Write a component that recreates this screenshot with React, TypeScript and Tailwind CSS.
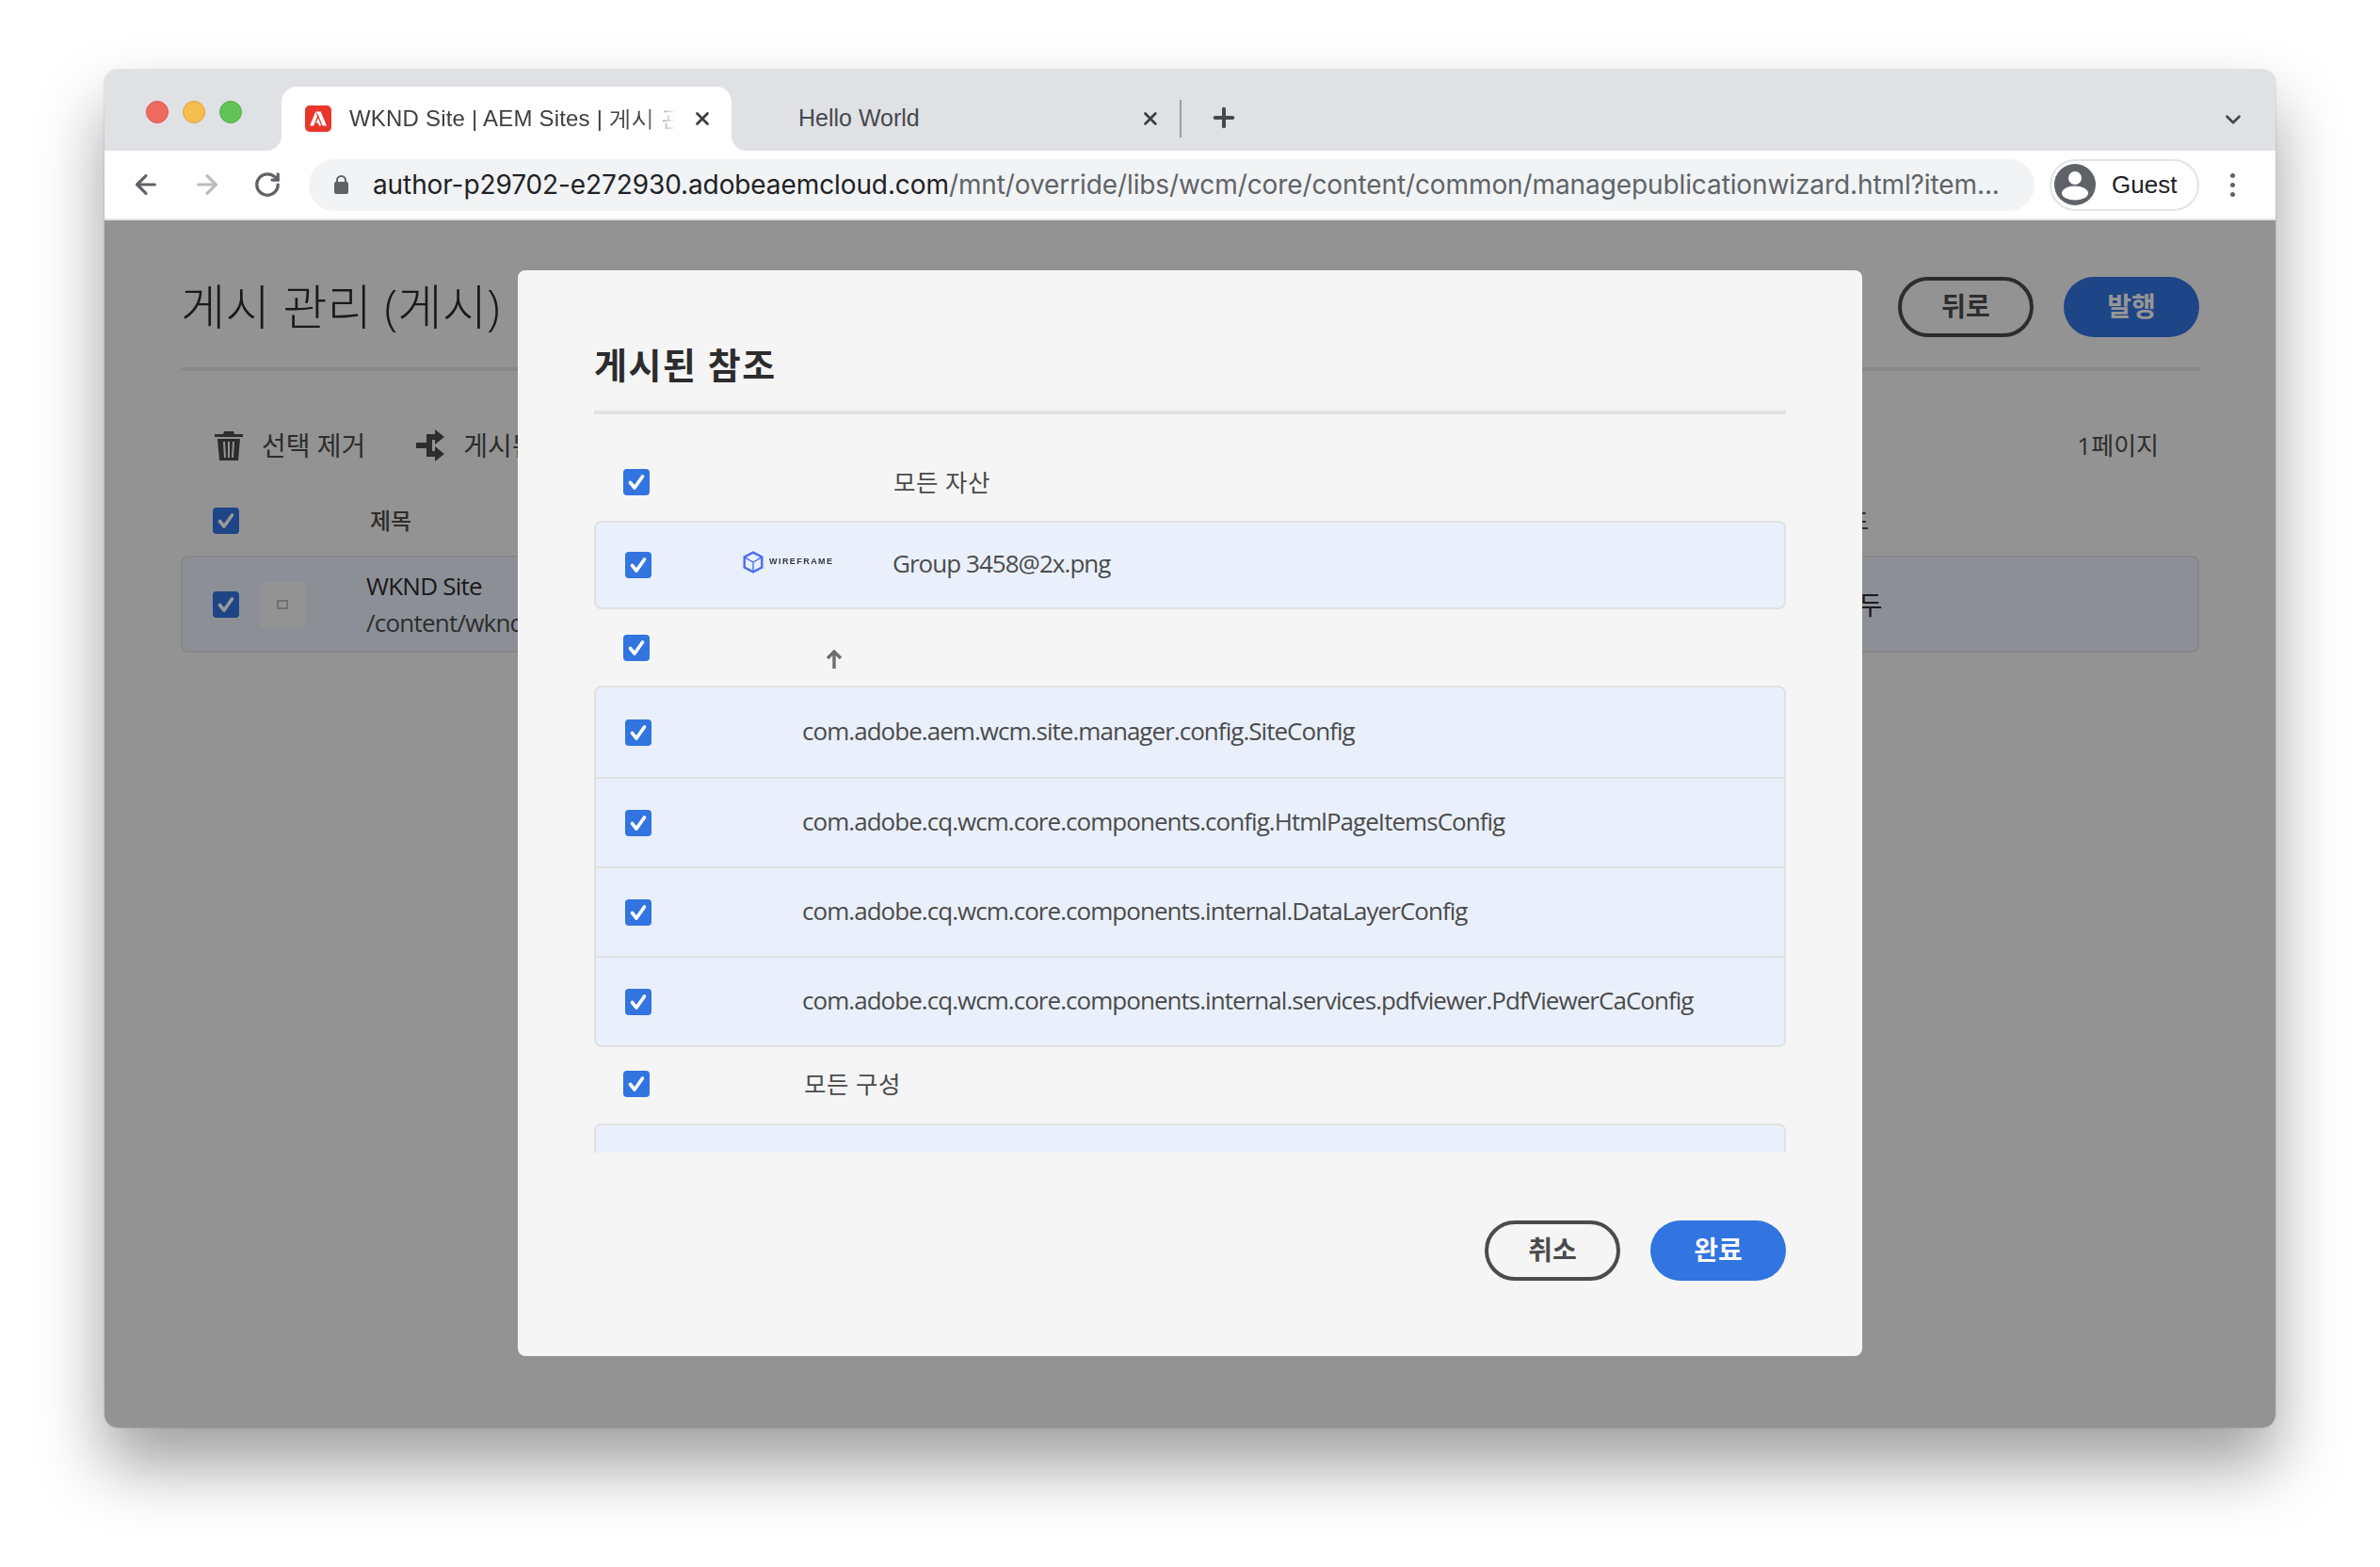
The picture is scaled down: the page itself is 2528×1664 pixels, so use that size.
import React from "react";
import { ArrowLeft, ArrowRight, ChevronDown, Plus, RotateCw, X } from "lucide-react";

const references = [
  "com.adobe.aem.wcm.site.manager.config.SiteConfig",
  "com.adobe.cq.wcm.core.components.config.HtmlPageItemsConfig",
  "com.adobe.cq.wcm.core.components.internal.DataLayerConfig",
  "com.adobe.cq.wcm.core.components.internal.services.pdfviewer.PdfViewerCaConfig",
];

const Check = () => (
  <span className="flex size-[28px] shrink-0 items-center justify-center rounded-[4px] bg-[#3274e0]">
    <svg width="20" height="20" viewBox="0 0 20 20" fill="none">
      <path d="M3.5 10.5 8 16 16.5 4" stroke="white" strokeWidth="3.6" strokeLinecap="round" strokeLinejoin="round" />
    </svg>
  </span>
);

const AdobeIcon = () => (
  <svg width="28" height="28" viewBox="0 0 28 28" className="shrink-0">
    <rect width="28" height="28" rx="5" fill="#e9362a" />
    <path d="M11.3 6.5H16.7L23 21.5H18.6L14 10Z M14 13.2 17.2 21.5H14.9L13.9 18.8H11.6Z M11.3 6.5 5 21.5H9.2L13 11.5Z" fill="white" />
  </svg>
);

const TabFlare = ({ side }: { side: "left" | "right" }) => (
  <svg
    width="16"
    height="16"
    viewBox="0 0 16 16"
    className={side === "left" ? "absolute bottom-0 left-[-16px]" : "absolute bottom-0 right-[-16px] -scale-x-100"}
  >
    <path d="M16 0V16H0C9 16 16 9 16 0Z" fill="white" />
  </svg>
);

const WireframeLogo = () => (
  <div className="ml-[96px] mt-[30px] flex h-[24px] w-[95px] shrink-0 items-center gap-[5px] self-start blur-[0.6px]">
    <svg width="24" height="24" viewBox="0 0 22 22" fill="none" stroke="#4a6cf5" strokeWidth="2.200" className="shrink-0">
      <path d="M11 1.5 19.5 6v10L11 20.5 2.5 16V6Z" />
      <path d="M2.5 6 11 11l8.500-5M11 11v9.500" strokeWidth="1.300" />
    </svg>
    <span className="font-['Liberation_Sans',sans-serif] text-[9px] font-bold tracking-[0.16em] text-[#34363f]">WIREFRAME</span>
  </div>
);

const PillButton = ({ label, primary }: { label: string; primary?: boolean }) => (
  <button
    className={
      primary
        ? "flex h-[64px] w-[144px] items-center justify-center rounded-full bg-[#3274e0] text-[28px] font-bold text-[#fafafa]"
        : "flex h-[64px] w-[144px] items-center justify-center rounded-full border-[4px] border-[#4b4b4b] text-[28px] font-bold text-[#4b4b4b]"
    }
  >
    <span className="-mt-[3px]">{label}</span>
  </button>
);

const Browser = () => (
  <>
    <div className="flex h-[86px] shrink-0 items-start bg-[#dfe1e5] pl-[44px]">
      <div className="mt-[33px] flex gap-[15px]">
        <span className="size-[24px] rounded-full border border-[#e0584f] bg-[#ee6a5f]" />
        <span className="size-[24px] rounded-full border border-[#dfa23b] bg-[#f5bd4f]" />
        <span className="size-[24px] rounded-full border border-[#52ad46] bg-[#61c454]" />
      </div>
      <div className="relative ml-[42px] mt-[18px] flex h-[68px] w-[478px] items-center rounded-t-[16px] bg-white pl-[25px]">
        <TabFlare side="left" />
        <TabFlare side="right" />
        <AdobeIcon />
        <span className="ml-[19px] w-[346px] overflow-hidden whitespace-nowrap text-[24px] tracking-[0.2px] text-[#3c4043] [mask-image:linear-gradient(to_right,black_91%,transparent)]">
          WKND Site | AEM Sites | 게시 관리 (게시)
        </span>
        <X size={22} strokeWidth={3} className="ml-[18px] text-[#3c4043]" />
      </div>
      <div className="mt-[18px] flex h-[68px] w-[478px] items-center pl-[71px]">
        <span className="w-[367px] text-[25px] text-[#45494d]">Hello World</span>
        <X size={22} strokeWidth={3} className="text-[#3c4043]" />
        <span className="ml-[20px] h-[40px] w-[2px] bg-[#9aa0a6]" />
      </div>
      <Plus size={32} strokeWidth={3} className="ml-[29px] mt-[35px] text-[#45494d]" />
      <ChevronDown size={26} strokeWidth={2.5} className="ml-auto mr-[32px] mt-[40px] text-[#45494d]" />
    </div>
    <div className="flex h-[74px] shrink-0 items-center border-b-[2px] border-[#e4e5e7] bg-white pl-[28px]">
      <ArrowLeft size={32} strokeWidth={2.4} className="text-[#5f6368]" />
      <ArrowRight size={32} strokeWidth={2.4} className="ml-[33px] text-[#b9bbbe]" />
      <RotateCw size={30} strokeWidth={2.6} className="ml-[33px] text-[#5f6368]" />
      <div className="ml-[29px] flex h-[55px] w-[1833px] items-center overflow-hidden rounded-full bg-[#f1f3f4] pl-[27px]">
        <svg width="15" height="20" viewBox="0 0 15 20" className="shrink-0">
          <path d="M3 8V5.500a4.500 4.500 0 0 1 9 0V8" fill="none" stroke="#5f6368" strokeWidth="2" />
          <rect y="7" width="15" height="13" rx="2" fill="#5f6368" />
        </svg>
        <span className="ml-[26px] whitespace-nowrap font-['Inter',sans-serif] text-[28px] tracking-[-0.1px] text-[#202124]">
          author-p29702-e272930.adobeaemcloud.com
          <span className="text-[#5f6368]">/mnt/override/libs/wcm/core/content/common/managepublicationwizard.html?item...</span>
        </span>
      </div>
      <div className="ml-[16px] flex h-[55px] w-[159px] items-center rounded-full border-[2px] border-[#e2e3e5] pl-[3px]">
        <svg width="44" height="44" viewBox="0 0 44 44">
          <circle cx="22" cy="22" r="22" fill="#5f6368" />
          <circle cx="22" cy="15" r="7" fill="white" />
          <ellipse cx="22" cy="31" rx="14" ry="7.500" fill="white" />
        </svg>
        <span className="ml-[17px] text-[26px] text-[#202124]">Guest</span>
      </div>
      <div className="ml-[33px] flex flex-col gap-[5px]">
        <span className="size-[5px] rounded-full bg-[#5f6368]" />
        <span className="size-[5px] rounded-full bg-[#5f6368]" />
        <span className="size-[5px] rounded-full bg-[#5f6368]" />
      </div>
    </div>
  </>
);

const ManagePublication = () => (
  <div className="flex h-full flex-col bg-[#f5f5f5] px-[81px] font-['Open_Sans','Noto_Sans_CJK_KR',sans-serif] text-[#4b4b4b]">
    <div className="flex h-[160px] shrink-0 items-center border-b-[4px] border-[#e1e1e1] pt-[28px]">
      <h1 className="text-[51.500px] font-light leading-none text-[#2c2c2c]">게시 관리 (게시)</h1>
      <div className="ml-auto flex gap-[32px]">
        <PillButton label="뒤로" />
        <PillButton label="발행" primary />
      </div>
    </div>
    <div className="flex h-[126px] shrink-0 items-center pl-[36px] pr-[43px] pt-[32px] text-[28px]">
      <svg width="30" height="32" viewBox="0 0 30 32" className="shrink-0" fill="#4b4b4b">
        <path d="M10 1h10l1 3h9v3H0V4h9Z" />
        <path d="M3 9h24l-2 23H5Zm6 3 1 17h2l-1-17Zm5 0v17h2V12Zm5 0-1 17h2l1-17Z" fillRule="evenodd" />
      </svg>
      <span className="ml-[20px]">선택 제거</span>
      <svg width="32" height="34" viewBox="0 0 32 34" className="ml-[54px] shrink-0" fill="#4b4b4b">
        <path d="M0 14h11V5h9V0l10 8-10 8v-5h-3v12h3v-5l10 8-10 8v-5h-9V20H0Z" />
      </svg>
      <span className="ml-[18px]">게시된 참조</span>
      <span className="ml-auto text-[26px]">1페이지</span>
    </div>
    <div className="flex h-[66px] shrink-0 items-center pl-[34px] text-[24px] font-medium">
      <Check />
      <span className="ml-[139px] w-[1548px]">제목</span>
      <span>모드</span>
    </div>
    <div className="mt-[4px] flex h-[103px] shrink-0 items-center rounded-[8px] border-[2px] border-[#e1e1e1] bg-[#e9f0fb] pl-[32px]">
      <Check />
      <div className="ml-[22px] flex size-[48px] items-center justify-center bg-[#f5f5f5]">
        <span className="h-[10px] w-[12px] border-[2px] border-[#bbbbbb]" />
      </div>
      <div className="ml-[65px] w-[1500px] text-[26px] tracking-[-0.03em]">
        <p className="text-[#2c2c2c]">WKND Site</p>
        <p>/content/wknd</p>
      </div>
      <span className="ml-[59px] text-[28px] text-[#2c2c2c]">모두</span>
    </div>
  </div>
);

const PublishedReferences = () => (
  <div className="absolute left-[439px] top-[53px] flex h-[1153px] w-[1428px] flex-col rounded-[8px] bg-[#f5f5f5] px-[81px] font-['Open_Sans','Noto_Sans_CJK_KR',sans-serif] text-[#4b4b4b]">
    <h2 className="flex h-[153px] shrink-0 items-end border-b-[4px] border-[#e1e1e1] pb-[30px] text-[38px] font-bold leading-none tracking-[0.04em] text-[#2c2c2c]">
      게시된 참조
    </h2>
    <div className="h-[784px] shrink-0 overflow-hidden pt-[58px] text-[26px] tracking-[-0.037em]">
      <div className="flex h-[28px] items-center pl-[31px]">
        <Check />
        <span className="ml-[259px] text-[25.500px] tracking-[0.02em]">모든 자산</span>
      </div>
      <div className="mt-[27px] flex h-[94px] items-center rounded-[8px] border-[2px] border-[#e1e1e1] bg-[#e9f0fb] pl-[31px]">
        <Check />
        <WireframeLogo />
        <span className="ml-[65px] -mt-[3px]">Group 3458@2x.png</span>
      </div>
      <div className="mt-[27px] flex h-[28px] pl-[31px]">
        <Check />
        <svg width="18" height="20" viewBox="0 0 18 20" className="ml-[187px] mt-[16px] shrink-0" fill="none" stroke="#6e6e6e" strokeWidth="3.400">
          <path d="M9 20V3M2 9l7-7 7 7" />
        </svg>
      </div>
      <div className="mt-[26px] overflow-hidden rounded-[8px] border-[2px] border-[#e1e1e1] bg-[#e9f0fb]">
        {references.map((name, i) => (
          <div
            key={name}
            className={i === 0 ? "flex h-[95px] items-center pl-[31px]" : "flex h-[95px] items-center border-t-[2px] border-[#e1e1e1] pl-[31px]"}
          >
            <Check />
            <span className="ml-[160px] -mt-[3px] whitespace-nowrap">{name}</span>
          </div>
        ))}
      </div>
      <div className="mt-[25px] flex h-[28px] items-center pl-[31px]">
        <Check />
        <span className="ml-[164px] text-[25.500px] tracking-[0.02em]">모든 구성</span>
      </div>
      <div className="mt-[28px] h-[96px] rounded-t-[8px] border-[2px] border-[#e1e1e1] bg-[#e9f0fb]" />
    </div>
    <div className="mt-[72px] flex justify-end gap-[32px]">
      <PillButton label="취소" />
      <PillButton label="완료" primary />
    </div>
  </div>
);

export default function App() {
  return (
    <div className="h-[1664px] w-[2528px] overflow-hidden bg-white pl-[111px] pt-[74px] font-['Liberation_Sans',sans-serif]">
      <div className="flex h-[1442px] w-[2306px] flex-col overflow-hidden rounded-[14px] shadow-[0_40px_70px_rgba(0,0,0,0.38),0_0_2px_rgba(0,0,0,0.25)]">
        <Browser />
        <div className="relative min-h-0 flex-1">
          <ManagePublication />
          <div className="absolute inset-0 bg-black/40" />
          <PublishedReferences />
        </div>
      </div>
    </div>
  );
}
